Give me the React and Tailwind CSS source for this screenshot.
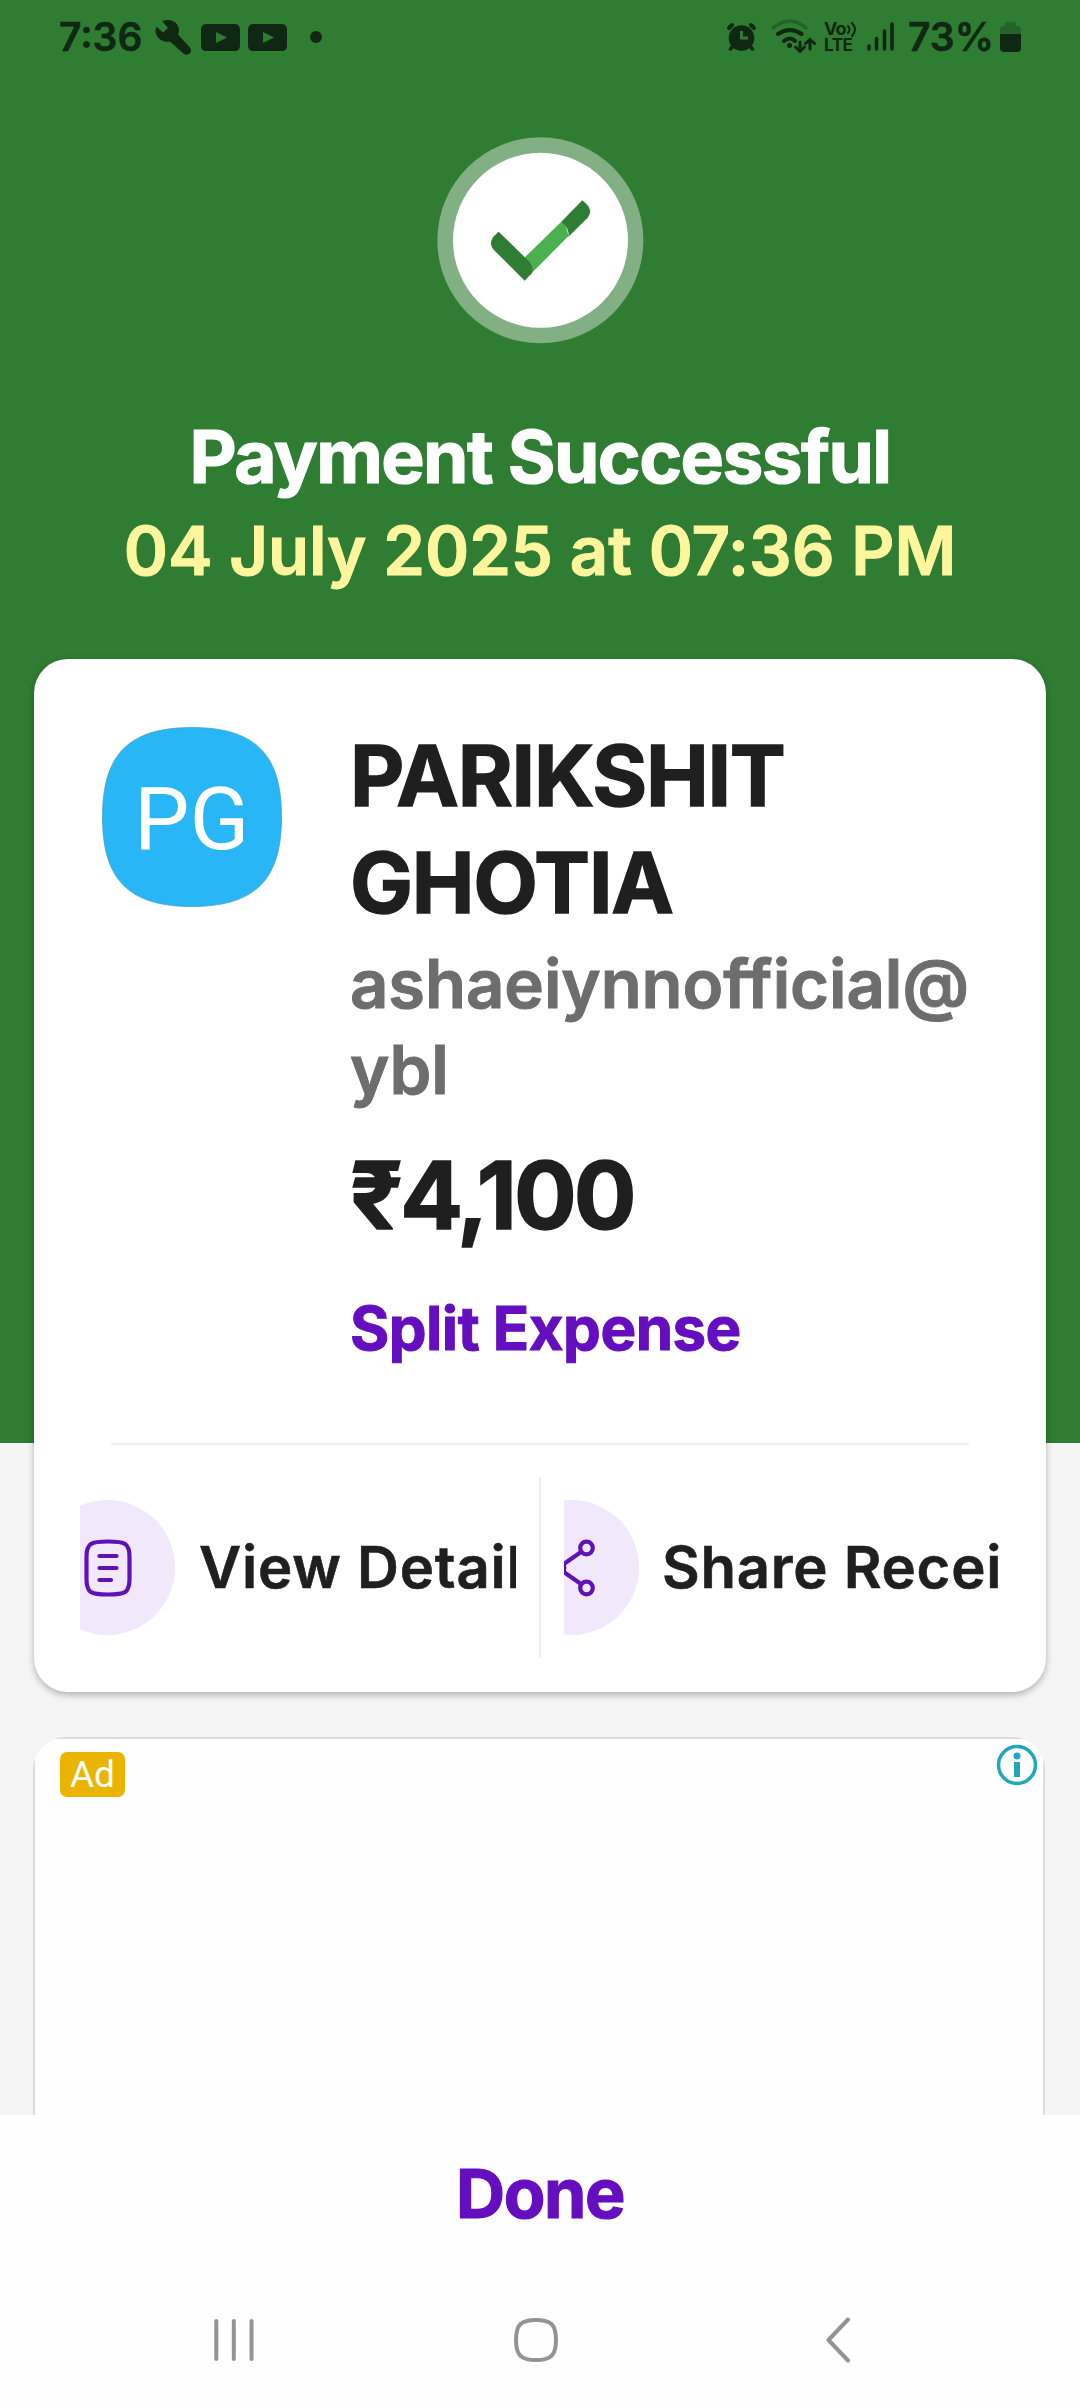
import React from "react";

function StatusBar() {
  return (
    <div className="flex h-[74px] shrink-0 items-center text-left text-[#0f2713]">
      <div className="ml-[59px] w-[94px] shrink-0 text-[39px] leading-[74px] font-semibold whitespace-nowrap [-webkit-text-stroke:0.5px]">7:36</div>
      <svg className="h-[74px] w-[175px] shrink-0" viewBox="153 0 175 74" fill="currentColor">
        <path d="M162 21C168 19 175 20 178 26C179.500 29 179 32 178 34.500L190 47.500C193 51 189 57 184 54L170 41.500C164 43 156 39 155.500 31C155.500 29 156 28 157 27L163 32.500L168 28Z" />
        <path d="M206 24H235Q240 24 240 30V45Q240 51 235 51H206Q201 51 201 45V30Q201 24 206 24ZM216 32V43L227 37.500Z" fillRule="evenodd" />
        <path d="M253 24H282Q287 24 287 30V45Q287 51 282 51H253Q248 51 248 45V30Q248 24 253 24ZM263 32V43L274 37.500Z" fillRule="evenodd" />
        <circle cx="316" cy="37" r="6" />
      </svg>
      <div className="grow" />
      <svg className="h-[74px] w-[97px] shrink-0" viewBox="725 0 97 74" fill="none" stroke="currentColor">
        <circle cx="741.500" cy="38" r="12.800" fill="currentColor" stroke="none" />
        <g strokeLinecap="round">
          <path d="M729 28L732 25M754 28L751 25" strokeWidth="4" />
          <path d="M734 45L730.500 49M749 45L752.500 49" strokeWidth="3.500" />
        </g>
        <path d="M741.500 31V38H748" stroke="#2e7d32" strokeWidth="3" />
        <g strokeWidth="4" strokeLinecap="round">
          <path d="M773 28Q790 14 806 28" stroke="#236428" strokeWidth="3.500" />
          <path d="M778 34Q790 26 801.500 34" />
          <path d="M784 41Q790 36 795 41" />
        </g>
        <circle cx="789.500" cy="45.500" r="2.500" fill="currentColor" stroke="none" />
        <path d="M800 42V51M795.500 47L800 51.500L804.500 47M810 49V40M805.500 43.500L810 39.500L814.500 43.500" strokeWidth="3" strokeLinecap="round" />
      </svg>
      <div className="ml-[2px] w-[42px] shrink-0 text-[17px] leading-[16px] font-bold whitespace-nowrap">
        <div className="flex items-center">
          <span className="text-[18px] leading-[16px] tracking-[-0.9px]">Vo</span>
          <svg className="ml-[1px] h-[16px] w-[10px]" viewBox="0 0 10 16" fill="none" stroke="currentColor" strokeWidth="2" strokeLinecap="round">
            <path d="M1 5Q4 8.500 1 12M5 2Q11 8.500 5 15" />
          </svg>
        </div>
        <div className="tracking-[-0.4px]">LTE</div>
      </div>
      <svg className="h-[74px] w-[30px] shrink-0" viewBox="867 0 30 74" fill="none" stroke="currentColor" strokeWidth="3.600" strokeLinecap="round">
        <path d="M870 46V49M877.500 38.500V49M885.500 31V49M893 24V49" />
      </svg>
      <div className="ml-[12px] w-[88px] shrink-0 text-[39px] leading-[74px] font-semibold whitespace-nowrap [-webkit-text-stroke:0.5px]">73%</div>
      <svg className="mr-[54px] h-[74px] w-[30px] shrink-0" viewBox="996 0 30 74">
        <path d="M1005 26V24Q1005 22 1007 22H1014Q1016 22 1016 24V26H1018Q1021 26 1021 30V34H1000V30Q1000 26 1003 26Z" fill="#236428" />
        <path d="M1000 34H1021V48Q1021 52 1017 52H1004Q1000 52 1000 48Z" fill="currentColor" />
      </svg>
    </div>
  );
}

function SuccessBadge() {
  return (
    <svg className="mx-auto mt-[46px] block h-[240px] w-[240px] shrink-0" viewBox="0 0 720 720">
      <circle cx="361" cy="361" r="309" fill="#82b084" />
      <circle cx="361.500" cy="361" r="262.500" fill="#fff" />
      <path d="M300 426L424 305Q440 310 445 349L326 468Z" fill="#4caf50" />
      <path d="M424 305L487 241L500 253Q520 272 503 293L445 350Q450 326 424 305Z" fill="#2e7d32" />
      <path d="M236 335L328 425Q342 440 336 459L314 482L221 389Q205 371 220 350Z" fill="#2e7d32" />
    </svg>
  );
}

function Payee() {
  return (
    <div className="flex px-[68px] pt-[63px]">
      <div className="relative mt-[5px] h-[180px] w-[180px] shrink-0">
        <svg className="absolute inset-0 h-full w-full" viewBox="0 0 180 180">
          <path d="M90 .5C156 .5 179.500 30 179.500 90S156 179.500 90 179.500S.5 150 .5 90S24 .5 90 .5Z" fill="#29b6f6" stroke="#3a9cc8" strokeWidth=".7" />
        </svg>
        <div className="relative pl-[32px] font-['Roboto'] text-[88px] leading-[184px] text-white">PG</div>
      </div>
      <div className="ml-[68px] text-[#1f1f1f]">
        <div className="text-[84px] leading-[107px] font-bold tracking-[-1.25px] [-webkit-text-stroke:1.4px]">
          PARIKSHIT
          <br />
          GHOTIA
        </div>
        <div className="mt-[5px] text-[67px] leading-[86px] font-semibold tracking-[-0.1px] text-[#6d6d6d] [-webkit-text-stroke:1px]">
          ashaeiynnofficial@
          <br />
          ybl
        </div>
        <div className="mt-[26px] text-[93px] leading-[112px] font-bold tracking-[-2.9px] [-webkit-text-stroke:1.5px]">₹4,100</div>
        <div className="mt-[41px] text-[60px] leading-[72px] font-bold tracking-[-0.5px] text-[#640ec0] [-webkit-text-stroke:1px]">Split Expense</div>
      </div>
    </div>
  );
}

function Actions() {
  return (
    <div className="flex pt-[32px]">
      <div className="ml-[46px] flex h-[181px] w-[436px] items-center overflow-hidden whitespace-nowrap">
        <div className="-ml-[40px] flex h-[135px] w-[135px] shrink-0 items-center justify-center rounded-full bg-[#f1e8fb]">
          <svg className="h-[58px] w-[48px]" viewBox="0 0 48 58" fill="none" stroke="#5f12b5" strokeWidth="4.200" strokeLinecap="round">
            <path d="M24 2.500C41 2.500 45.500 4 45.500 18V40C45.500 54 41 55.500 24 55.500S2.500 54 2.500 40V18C2.500 4 7 2.500 24 2.500Z" />
            <path d="M15.500 17H32.500M15.500 29H32.500M15.500 41H27" />
          </svg>
        </div>
        <span className="mb-[2px] ml-[24px] text-[58px] leading-[72px] font-semibold tracking-[0.8px] text-[#1f1f1f] [-webkit-text-stroke:0.6px]">View Details</span>
      </div>
      <div className="ml-[23px] h-[181px] w-[2px] bg-[#eeeeee]" />
      <div className="ml-[23px] flex h-[181px] w-[436px] items-center overflow-hidden whitespace-nowrap">
        <div className="-ml-[60px] flex h-[135px] w-[135px] shrink-0 items-center justify-center rounded-full bg-[#f1e8fb]">
          <svg className="h-[58px] w-[48px]" viewBox="0 0 48 58" fill="none" stroke="#5f12b5" strokeWidth="4.200">
            <circle cx="38.500" cy="9" r="6.300" />
            <circle cx="10" cy="29" r="6.300" />
            <circle cx="38.500" cy="49" r="6.300" />
            <path d="M15 25.500L33 13M15 32.500L33 45" />
          </svg>
        </div>
        <span className="mb-[2px] ml-[23px] text-[58px] leading-[72px] font-semibold tracking-[0.75px] text-[#1f1f1f] [-webkit-text-stroke:0.6px]">Share Receipt</span>
      </div>
    </div>
  );
}

function AdCard() {
  return (
    <div className="mt-[45px] ml-[33px] h-[378px] w-[1012px] shrink-0 overflow-hidden rounded-t-[32px] bg-[#dcdcdc] px-[2px] pt-[2px]">
      <div className="flex h-full items-start justify-between bg-[#fefefe]">
        <div className="mt-[13px] ml-[25px] h-[45px] w-[65px] rounded-[7px] bg-[#ebb400] text-center font-['Roboto'] text-[37px] leading-[46px] text-white">Ad</div>
        <svg className="mt-[5px] mr-[5px] h-[42px] w-[42px]" viewBox="0 0 42 42">
          <circle cx="21" cy="21" r="18.500" fill="#fff" stroke="#1ea7bd" strokeWidth="3.500" />
          <circle cx="21" cy="12" r="3.500" fill="#1ea7bd" />
          <path d="M18 18H24V33H18Z" fill="#1ea7bd" />
        </svg>
      </div>
    </div>
  );
}

function SystemNav() {
  return (
    <div className="flex h-[136px] items-center pl-[214px] text-[#939393]">
      <svg className="h-[46px] w-[40px]" viewBox="0 0 40 46" fill="none" stroke="currentColor" strokeWidth="4" strokeLinecap="round">
        <path d="M2.300 4V42M19.800 4V42M37.500 4V42" />
      </svg>
      <svg className="ml-[259px] h-[46px] w-[46px]" viewBox="0 0 46 46" fill="none" stroke="currentColor" strokeWidth="4">
        <path d="M23 3C38 3 43 7.500 43 23S38 43 23 43S3 38.500 3 23S8 3 23 3Z" />
      </svg>
      <svg className="ml-[266px] h-[46px] w-[28px]" viewBox="0 0 28 46" fill="none" stroke="currentColor" strokeWidth="4" strokeLinecap="round" strokeLinejoin="round">
        <path d="M23 2.500L3.500 23L23 43.500" />
      </svg>
    </div>
  );
}

export default function App() {
  return (
    <div className="flex h-[2408px] w-[1080px] flex-col overflow-hidden bg-[#f5f5f5] font-['Inter',sans-serif]">
      <div className="flex h-[1443px] shrink-0 flex-col bg-[#2e7d32] text-center">
        <StatusBar />
        <SuccessBadge />
        <div className="mt-[53px] text-[73px] leading-[88px] font-bold tracking-[-1.6px] text-white [-webkit-text-stroke:1.2px]">Payment Successful</div>
        <div className="mt-[9px] text-[67px] leading-[82px] font-semibold tracking-[-0.05px] text-[#fff59d] [-webkit-text-stroke:1px]">04 July 2025 at 07:36 PM</div>
      </div>
      <div className="relative mx-[34px] -mt-[784px] h-[1033px] shrink-0 rounded-[34px] bg-white shadow-[0_3px_7px_rgba(0,0,0,0.28)]">
        <Payee />
        <div className="mt-[79px] mr-[77px] ml-[77px] h-[2px] bg-[#eeeeee]" />
        <Actions />
      </div>
      <AdCard />
      <div className="flex grow flex-col justify-between bg-[#fefefe]">
        <div className="mt-[36px] text-center text-[68px] leading-[84px] font-bold tracking-[-1.4px] text-[#640ec0] [-webkit-text-stroke:1.2px]">Done</div>
        <SystemNav />
      </div>
    </div>
  );
}
